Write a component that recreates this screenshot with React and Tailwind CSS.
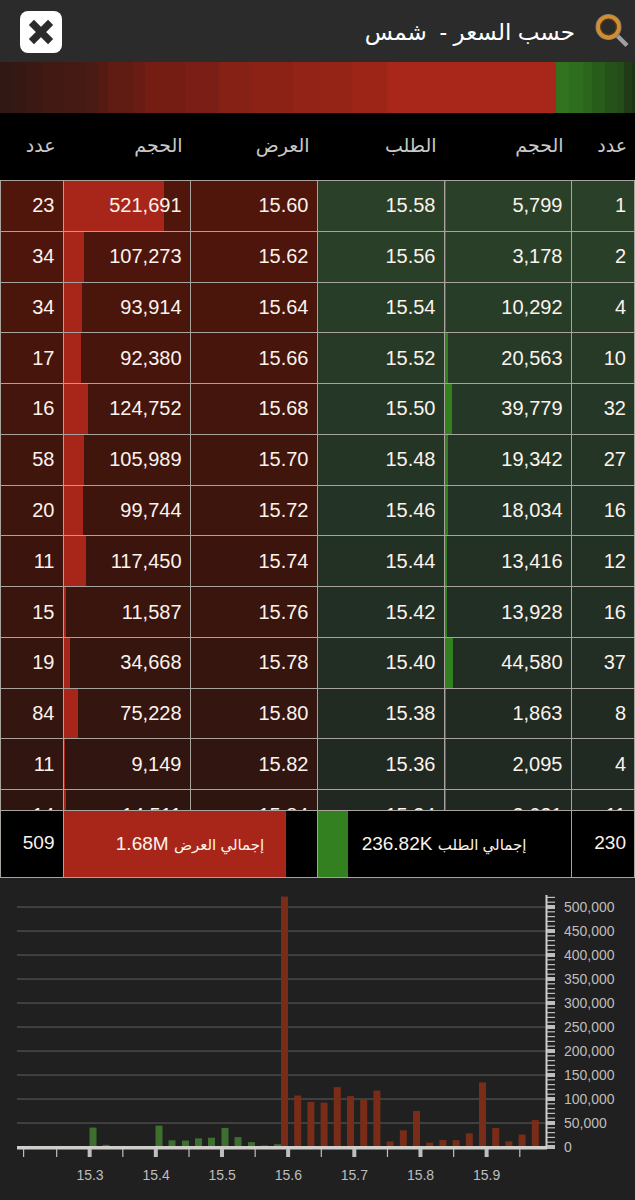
const depth = [
  [13, '#321814'], [13, '#361813'], [16, '#3b1813'], [22, '#431914'], [22, '#451914'], [12, '#4a1a14'], [10, '#531b14'],
  [25, '#601b13'], [12, '#681c13'], [40, '#751d13'], [34, '#7b1e15'], [33, '#862115'], [41, '#8c2116'],
  [28, '#922316'], [31, '#962416'], [35, '#9c2518'], [169, '#a8271a'],
  [13, '#31731f'], [14, '#2e6d1d'], [9, '#2b661c'], [13, '#285c1a'], [12, '#255219'], [7, '#234c19'], [8, '#1f3c17'], [3, '#1c3415'],
];

const rows = [
  [23, 521691, '15.60', '15.58', 5799, 1],
  [34, 107273, '15.62', '15.56', 3178, 2],
  [34, 93914, '15.64', '15.54', 10292, 4],
  [17, 92380, '15.66', '15.52', 20563, 10],
  [16, 124752, '15.68', '15.50', 39779, 32],
  [58, 105989, '15.70', '15.48', 19342, 27],
  [20, 99744, '15.72', '15.46', 18034, 16],
  [11, 117450, '15.74', '15.44', 13416, 12],
  [15, 11587, '15.76', '15.42', 13928, 16],
  [19, 34668, '15.78', '15.40', 44580, 37],
  [84, 75228, '15.80', '15.38', 1863, 8],
  [11, 9149, '15.82', '15.36', 2095, 4],
  [14, 14511, '15.84', '15.34', 2621, 11],
];

const askShades = ['#50160b', '#4d150b', '#4a150b', '#47150b', '#43150c', '#40150c', '#3e150c', '#3b150d', '#39150d', '#36150e', '#34150f', '#311510', '#2f1510'];
const bidShades = ['#2a4028', '#293f28', '#283d28', '#263a27', '#253827', '#243526', '#233325', '#233024', '#222f24', '#222d23', '#212b22', '#202922', '#202821'];

const line = 'border-b border-r border-[#a8a39d]';
const cell = `${line} relative px-2 pt-0 pb-px text-right`;

function Bar({ value, className }) {
  return <span className={`absolute inset-y-0 left-0 ${className}`} style={{ width: `${value}%` }} />;
}

function Header() {
  return (
    <header className="flex h-[62px] items-center justify-between bg-[#2b2b2b] pl-5 pr-1 pt-0.5">
      <button type="button" aria-label="إغلاق" className="flex size-[42px] items-center justify-center rounded-lg bg-white">
        <svg viewBox="0 0 26 26" className="size-[26px]" aria-hidden="true">
          <path d="M3.4 3.4 22.6 22.6M22.6 3.4 3.4 22.6" stroke="#2b2b2b" strokeWidth="7.2" />
        </svg>
      </button>
      <div className="flex items-center gap-5">
        <h1 dir="rtl" className="whitespace-pre text-[23px] leading-8 text-white">حسب السعر -  شمس</h1>
        <button type="button" aria-label="بحث">
          <svg viewBox="0 0 36 36" className="size-9" aria-hidden="true">
            <path d="M22.5 22 32 31.5" stroke="#9d9fa3" strokeWidth="4.4" />
            <circle cx="13.5" cy="13" r="12.4" fill="none" stroke="#8d8270" strokeWidth="1.2" />
            <circle cx="13.5" cy="13" r="10.2" fill="none" stroke="#d08e31" strokeWidth="4" />
            <circle cx="13.5" cy="13" r="7.8" fill="none" stroke="#5c3a12" strokeWidth="1.2" />
          </svg>
        </button>
      </div>
    </header>
  );
}

function OrderBook() {
  const heads = ['عدد', 'الحجم', 'العرض', 'الطلب', 'الحجم', 'عدد'];
  return (
    <div className="h-[765px] overflow-y-auto [scrollbar-width:none]">
      <table className="h-[796px] w-full table-fixed border-separate border-spacing-0 text-xl text-[#fbf3ec]">
        <colgroup>
          <col className="w-[10%]" />
          <col className="w-[20%]" />
          <col className="w-[20%]" />
          <col className="w-[20%]" />
          <col className="w-[20%]" />
          <col className="w-[10%]" />
        </colgroup>
        <thead className="sticky top-0 z-10 bg-black text-[19px]">
          <tr className="h-[68px]">
            {heads.map((h, i) => (
              <th key={i} scope="col" dir="rtl" className="border-b border-[#a8a39d] px-2 text-right font-normal text-[#c9c9c9]">{h}</th>
            ))}
          </tr>
        </thead>
        <tbody>
          {rows.map(([askCount, askVol, ask, bid, bidVol, bidCount], i) => {
            const red = { backgroundColor: askShades[i] };
            const green = { backgroundColor: bidShades[i] };
            return (
              <tr key={ask}>
                <td className={`${cell} border-l`} style={red}>{askCount}</td>
                <td className={cell} style={red}>
                  <Bar value={(askVol / 521691) * 80} className="bg-[#a82619]" />
                  <span className="relative">{askVol.toLocaleString('en-US')}</span>
                </td>
                <td className={cell} style={red}>{ask}</td>
                <td className={cell} style={green}>{bid}</td>
                <td className={cell} style={green}>
                  <Bar value={(bidVol / 521691) * 80} className="bg-[#338021]" />
                  <span className="relative">{bidVol.toLocaleString('en-US')}</span>
                </td>
                <td className={cell} style={green}>{bidCount}</td>
              </tr>
            );
          })}
        </tbody>
        <tfoot className="sticky bottom-0 z-10 bg-black text-[19px]">
          <tr className="h-[68px]">
            <td className={`${cell} border-l border-t`}>509</td>
            <td colSpan={2} className={`${line} relative border-t text-center`}>
              <Bar value={88} className="bg-[#a82619]" />
              <span dir="rtl" className="relative"><span className="text-[15px]">إجمالي العرض</span> 1.68M</span>
            </td>
            <td colSpan={2} className={`${line} relative border-t text-center`}>
              <Bar value={12} className="bg-[#338021]" />
              <span dir="rtl" className="relative"><span className="text-[15px]">إجمالي الطلب</span> 236.82K</span>
            </td>
            <td className={`${cell} border-t`}>230</td>
          </tr>
        </tfoot>
      </table>
    </div>
  );
}

const base = 269;
const yOf = (v) => base - (v / 50000) * 24;
const bidBars = [[23, 1500], [89.5, 40500], [102.5, 4500], [115.5, 1500], [129, 1200], [142, 1500], [155.5, 44580], [168.5, 13928], [182, 13416], [195, 18034], [208, 19342], [221.5, 39779], [234.5, 20563], [248, 10292], [261, 3178], [274, 5799]];
const askVolumes = [521691, 107273, 93914, 92380, 124752, 105989, 99744, 117450, 11587, 34668, 75228, 9149, 14511, 14200, 28500, 134500, 39500, 11800, 26000, 56000];

function VolumeChart() {
  return (
    <section className="flex-1 bg-[#202020]">
      <svg viewBox="0 0 635 322" className="block w-full" role="img" aria-label="الحجم حسب السعر" fontSize="14" fill="#bebebe">
        {Array.from({ length: 10 }, (_, i) => (
          <rect key={i} x="17" y={yOf((i + 1) * 50000) - 0.8} width="529" height="1.7" fill="#454545" />
        ))}
        {bidBars.map(([x, v]) => (
          <rect key={x} x={x} y={yOf(v)} width="7" height={base - yOf(v)} fill="#3d6f2f" />
        ))}
        {askVolumes.map((v, i) => (
          <rect key={i} x={281 + i * 13.2} y={yOf(v)} width="7" height={base - yOf(v)} fill="#792d18" />
        ))}
        <rect x="17" y="268" width="530" height="3.5" fill="#d0cecb" />
        <rect x="545.5" y="17" width="2" height="254" fill="#d0cecb" />
        {Array.from({ length: 16 }, (_, i) => {
          const major = i % 2 === 0 && i > 0;
          const x = 23.5 + i * 33.08;
          return <rect key={i} x={major ? x - 2 : x - 0.5} y="271" width={major ? 4 : 1.2} height="8" fill="#bebebe" />;
        })}
        {Array.from({ length: 53 }, (_, i) => (
          <rect key={i} x="547" y={i % 5 === 0 ? yOf(i * 10000) - 2 : yOf(i * 10000) - 0.6} width="8" height={i % 5 === 0 ? 4 : 1.2} fill="#bebebe" />
        ))}
        {Array.from({ length: 11 }, (_, i) => (
          <text key={i} x="564" y={yOf(i * 50000) + 5}>{(i * 50000).toLocaleString('en-US')}</text>
        ))}
        {['15.3', '15.4', '15.5', '15.6', '15.7', '15.8', '15.9'].map((p, i) => (
          <text key={p} x={90 + i * 66.1} y="302" textAnchor="middle">{p}</text>
        ))}
      </svg>
    </section>
  );
}

export default function App() {
  return (
    <main className="flex min-h-screen flex-col bg-[#202020] font-['Liberation_Sans','DejaVu_Sans',sans-serif]">
      <Header />
      <div className="flex h-[51px]">
        {depth.map(([size, color], i) => (
          <div key={i} className="basis-0" style={{ flexGrow: size, backgroundColor: color }} />
        ))}
      </div>
      <OrderBook />
      <VolumeChart />
    </main>
  );
}
